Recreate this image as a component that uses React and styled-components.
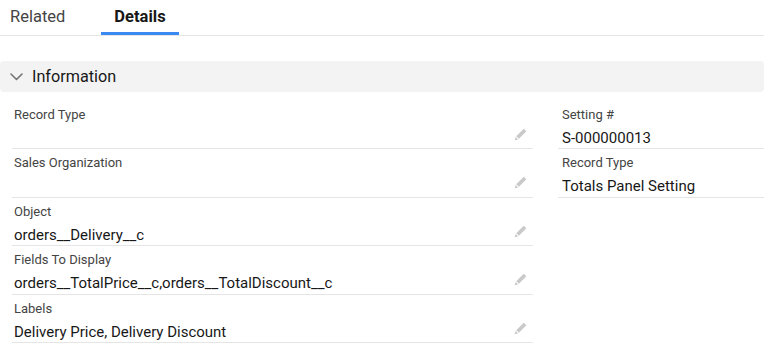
import React from "react";
import styled, { createGlobalStyle } from "styled-components";

const Global = createGlobalStyle`
  html, body { margin: 0; padding: 0; background: #fff; }
  body { font-family: "Roboto", "Liberation Sans", sans-serif; color: #181818; -webkit-font-smoothing: antialiased; }
  * { box-sizing: border-box; }
`;

const Page = styled.div`
  width: 764px;
  height: 357px;
  overflow: hidden;
  background: #fff;
`;

const TabBar = styled.div`
  display: flex;
  height: 36px;
  border-bottom: 1px solid #e5e5e5;
`;

const Tab = styled.div`
  display: flex;
  align-items: center;
  justify-content: ${(p) => (p.$first ? "flex-start" : "center")};
  height: 35px;
  width: ${(p) => (p.$first ? "101px" : "78px")};
  padding: 0 0 2px ${(p) => (p.$first ? "10px" : "0")};
  font-size: 16.5px;
  font-weight: ${(p) => (p.$active ? 700 : 400)};
  color: ${(p) => (p.$active ? "#181818" : "#444")};
  box-shadow: ${(p) => (p.$active ? "inset 0 -3px 0 #3b8af2" : "none")};
`;

const Section = styled.div`
  margin-top: 25px;
`;

const SectionHeader = styled.div`
  display: flex;
  align-items: center;
  height: 31px;
  background: #f3f3f3;
  border-radius: 4px;
  padding-left: 10px;
  gap: 9px;
  font-size: 16.2px;
  color: #181818;
`;

const Grid = styled.div`
  display: grid;
  grid-template-columns: 521px 1fr;
  column-gap: 25px;
  margin-left: 12px;
  margin-top: 8.5px;
  align-items: start;
`;

const Column = styled.div`
  display: flex;
  flex-direction: column;
`;

const Field = styled.div`
  position: relative;
  height: 48.5px;
  padding: 4px 0 0 ${(p) => (p.$right ? "4px" : "2px")};
  border-bottom: 1px solid #e5e5e5;
`;

const Label = styled.div`
  font-size: 13px;
  line-height: 20px;
  color: #444;
`;

const Value = styled.div`
  margin-top: 2px;
  font-size: 15px;
  line-height: 22px;
  color: #181818;
  min-height: 22px;
`;

const EditButton = styled.span`
  position: absolute;
  right: 6px;
  top: 27px;
  width: 13px;
  height: 13px;
  display: flex;
`;

const Chevron = () => (
  <svg width="13" height="8" viewBox="0 0 13 8" fill="none">
    <path d="M1 1l5.5 5.5L12 1" stroke="#747474" strokeWidth="1.6" strokeLinecap="round" strokeLinejoin="round" />
  </svg>
);

const Pencil = () => (
  <svg width="13" height="13" viewBox="0 0 12 12">
    <path d="M9 0.6l2.4 2.4-6.9 6.9-2.4-2.4z" fill="#c9c9c9" />
    <path d="M1.5 8.2l2.3 2.3-3.2 0.9z" fill="#c9c9c9" />
  </svg>
);

const leftFields = [
  { label: "Record Type", value: "" },
  { label: "Sales Organization", value: "" },
  { label: "Object", value: "orders__Delivery__c" },
  { label: "Fields To Display", value: "orders__TotalPrice__c,orders__TotalDiscount__c" },
  { label: "Labels", value: "Delivery Price, Delivery Discount" },
];

const rightFields = [
  { label: "Setting #", value: "S-000000013" },
  { label: "Record Type", value: "Totals Panel Setting" },
];

export default function App() {
  return (
    <Page>
      <Global />
      <TabBar>
        <Tab $first>Related</Tab>
        <Tab $active>Details</Tab>
      </TabBar>
      <Section>
        <SectionHeader>
          <Chevron />
          <span>Information</span>
        </SectionHeader>
        <Grid>
          <Column>
            {leftFields.map((f) => (
              <Field key={f.label}>
                <Label>{f.label}</Label>
                <Value>{f.value}</Value>
                <EditButton>
                  <Pencil />
                </EditButton>
              </Field>
            ))}
          </Column>
          <Column>
            {rightFields.map((f) => (
              <Field key={f.label} $right>
                <Label>{f.label}</Label>
                <Value>{f.value}</Value>
              </Field>
            ))}
          </Column>
        </Grid>
      </Section>
    </Page>
  );
}
